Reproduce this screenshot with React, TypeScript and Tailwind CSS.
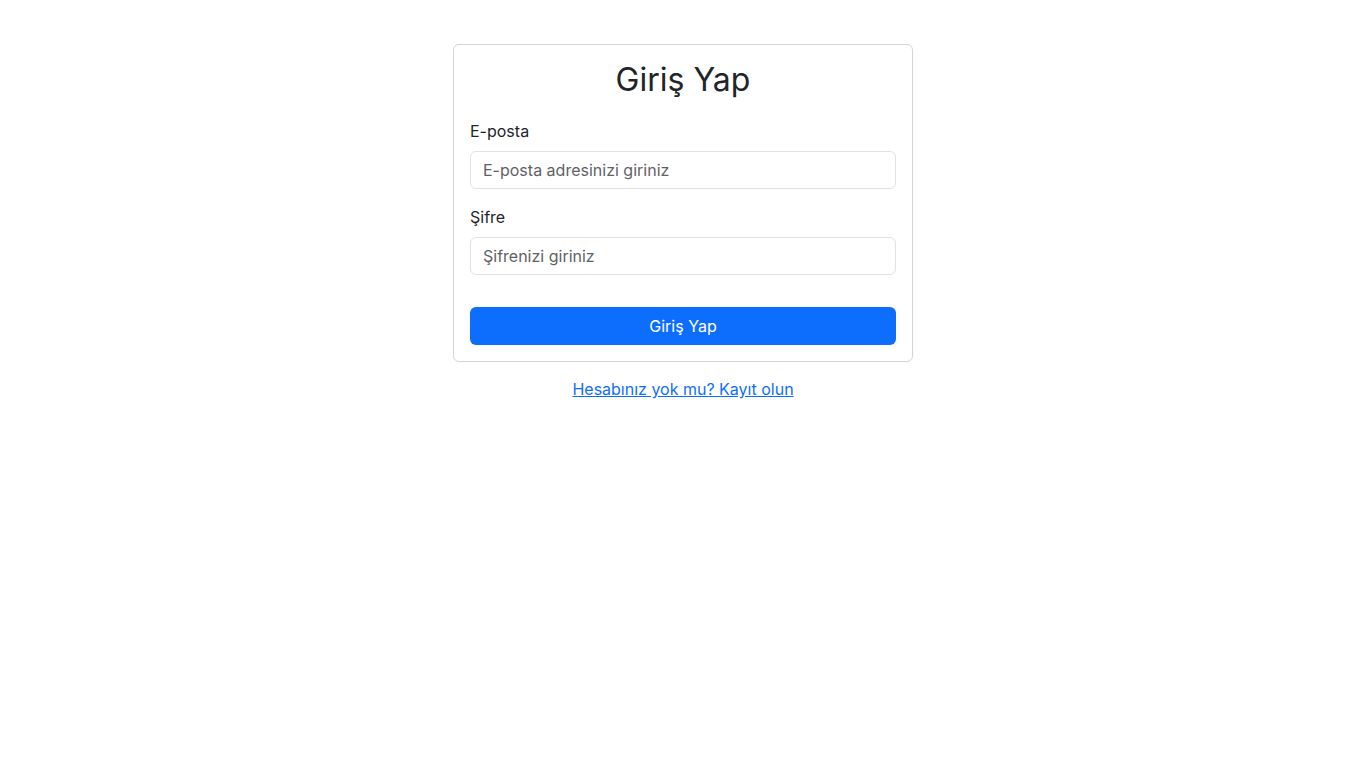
export default function App() {
  return (
    <div className="min-h-screen bg-white text-[#212529]" style={{ fontFamily: 'Inter, "Noto Sans", sans-serif' }}>
      <div className="mx-auto flex w-[460px] flex-col items-stretch pt-[44px]">
        <form
          className="rounded-[6px] border border-[#d3d4d5] p-4"
          onSubmit={(e) => e.preventDefault()}
        >
          <h2 className="mb-[20px] text-center text-[32px] font-normal leading-[38px]">Giriş Yap</h2>

          <div className="mb-4">
            <label className="mb-2 block text-base leading-6">E-posta</label>
            <input
              type="email"
              placeholder="E-posta adresinizi giriniz"
              className="block h-[38px] w-full rounded-[6px] border border-[#dee2e6] px-3 text-base leading-6 placeholder:text-[#5f6265] focus:outline-none"
            />
          </div>

          <div className="mb-8">
            <label className="mb-2 block text-base leading-6">Şifre</label>
            <input
              type="password"
              placeholder="Şifrenizi giriniz"
              className="block h-[38px] w-full rounded-[6px] border border-[#dee2e6] px-3 text-base leading-6 placeholder:text-[#5f6265] focus:outline-none"
            />
          </div>

          <button
            type="submit"
            className="block h-[38px] w-full rounded-[6px] bg-[#0d6efd] text-base leading-6 text-white"
          >
            Giriş Yap
          </button>
        </form>

        <div className="mt-[15px] text-center">
          <a href="#" className="text-base leading-6 text-[#0d6efd] underline">
            Hesabınız yok mu? Kayıt olun
          </a>
        </div>
      </div>
    </div>
  )
}
